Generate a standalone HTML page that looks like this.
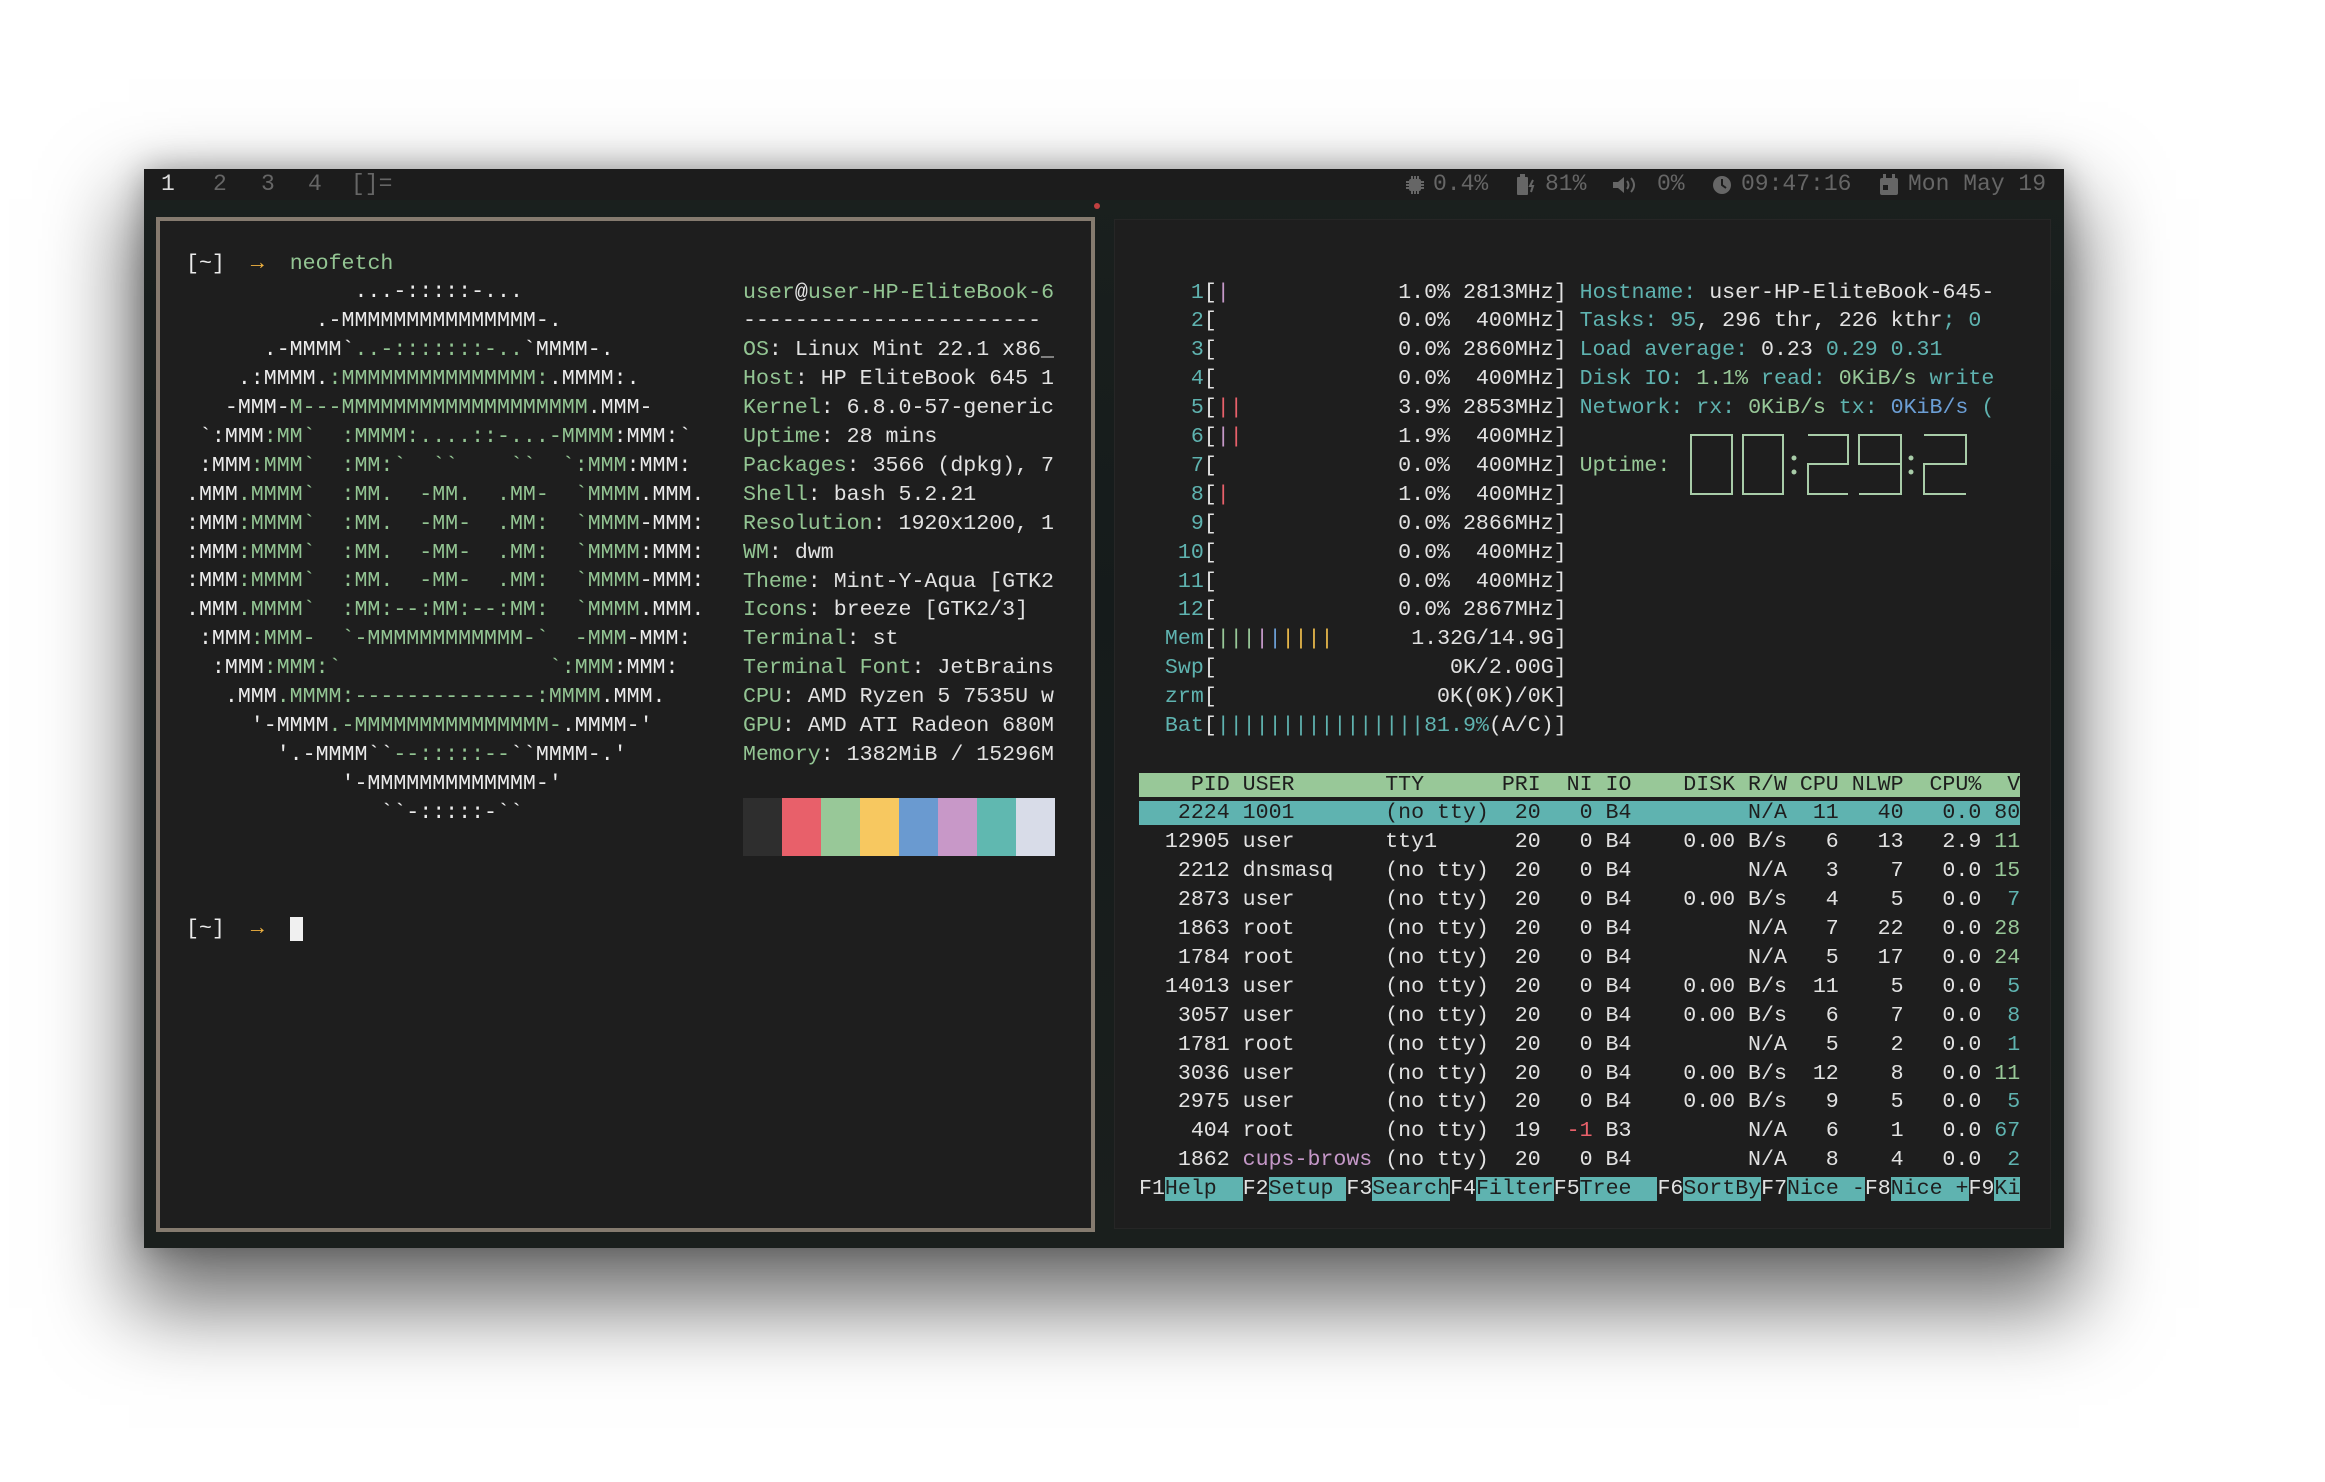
<!DOCTYPE html>
<html><head><meta charset="utf-8"><style>
*{margin:0;padding:0;box-sizing:border-box}
body{width:2325px;height:1482px;background:#fff;position:relative;overflow:hidden;font-family:"Liberation Mono",monospace}
#scr{position:absolute;left:144px;top:169px;width:1920px;height:1079px;background:linear-gradient(180deg,#1a201e 0%,#151b1b 40%,#1a1f1d 100%);box-shadow:0 45px 80px 15px rgba(0,0,0,.55),0 0 30px rgba(0,0,0,.3)}
#bar{position:absolute;left:144px;top:169px;width:1920px;height:31px;background:#1c1c1c;font-size:23px;line-height:31px;color:#666}
.t{position:absolute;top:0}
pre{font-family:"Liberation Mono",monospace;font-size:21.6px;line-height:28.9px;position:absolute;white-space:pre;color:#e2e2e2}
#lw{position:absolute;left:156px;top:217px;width:939px;height:1015px;background:#1e1e1e;border:4px solid #857b6f}
#rw{position:absolute;left:1114px;top:219px;width:937px;height:1010px;background:#1e1e1e;border:1px solid #262626}
.g{color:#93c593}.w{color:#ececec}.o{color:#f2b440}.tl{color:#5fb3b0}.gr{color:#98c898}.bl{color:#6c9fd6}.r{color:#e8606a}.p{color:#c598c8}.y{color:#e8b84a}
.hd{background:#98c898;color:#1e1e1e}.sel{background:#5fb3b0;color:#1e1e1e}.fk{background:#5fb3b0;color:#1e1e1e}
</style></head><body>
<div id="scr">
<div style="position:absolute;left:950px;top:34px;width:6px;height:6px;background:#c04040;border-radius:3px"></div>
</div>
<div id="bar">
<span class="t" style="left:17px;color:#ddd">1</span>
<span class="t" style="left:69px">2</span>
<span class="t" style="left:117px">3</span>
<span class="t" style="left:164px">4</span>
<span class="t" style="left:207px">[]=</span>
<svg class="t" style="left:1262px;top:7px" width="18" height="18" viewBox="0 0 18 18"><rect x="3" y="3" width="12" height="12" rx="2" fill="#666"/><g stroke="#666" stroke-width="2"><path d="M6 0v3M9 0v3M12 0v3M6 15v3M9 15v3M12 15v3M0 6h3M0 9h3M0 12h3M15 6h3M15 9h3M15 12h3"/></g></svg>
<span class="t" style="left:1289px">0.4%</span>
<svg class="t" style="left:1372px;top:5px" width="20" height="22" viewBox="0 0 20 22"><rect x="1" y="3" width="11" height="18" rx="1" fill="#666"/><rect x="4" y="0" width="5" height="3" fill="#666"/><path d="M17 6l-3 6h3l-2 6" stroke="#666" stroke-width="2" fill="none"/></svg>
<span class="t" style="left:1401px">81%</span>
<svg class="t" style="left:1468px;top:6px" width="26" height="20" viewBox="0 0 26 20"><path d="M1 7h5l6-5v16l-6-5H1z" fill="#666"/><path d="M15 6q3 4 0 8M19 3q6 7 0 14" stroke="#666" stroke-width="2" fill="none"/></svg>
<span class="t" style="left:1513px">0%</span>
<svg class="t" style="left:1568px;top:6px" width="20" height="20" viewBox="0 0 20 20"><circle cx="10" cy="10" r="9" fill="#666"/><path d="M10 4v6l4 3" stroke="#1c1c1c" stroke-width="2" fill="none"/></svg>
<span class="t" style="left:1597px">09:47:16</span>
<svg class="t" style="left:1735px;top:5px" width="20" height="22" viewBox="0 0 20 22"><rect x="1" y="4" width="18" height="17" rx="2" fill="#666"/><rect x="4" y="0" width="3" height="6" fill="#666"/><rect x="13" y="0" width="3" height="6" fill="#666"/><rect x="4" y="11" width="5" height="5" fill="#1c1c1c"/></svg>
<span class="t" style="left:1764px">Mon May 19</span>
</div>

<div id="lw"></div>
<pre style="left:186px;top:249.5px"><span class="w">[~]</span>  <span class="o">→</span>  <span class="g">neofetch</span>
<span class="w">             ...-:::::-...</span>
<span class="w">          .-MMMMMMMMMMMMMMM-.</span>
<span class="w">      .-MMMM`</span><span class="g">..-:::::::-..</span><span class="w">`MMMM-.</span>
<span class="w">    .:MMMM.</span><span class="g">:MMMMMMMMMMMMMMM:</span><span class="w">.MMMM:.</span>
<span class="w">   -MMM-</span><span class="g">M---MMMMMMMMMMMMMMMMMMM</span><span class="w">.MMM-</span>
<span class="w"> `:MMM</span><span class="g">:MM`  :MMMM:....::-...-MMMM</span><span class="w">:MMM:`</span>
<span class="w"> :MMM</span><span class="g">:MMM`  :MM:`  ``    ``  `:MMM</span><span class="w">:MMM:</span>
<span class="w">.MMM</span><span class="g">.MMMM`  :MM.  -MM.  .MM-  `MMMM</span><span class="w">.MMM.</span>
<span class="w">:MMM</span><span class="g">:MMMM`  :MM.  -MM-  .MM:  `MMMM</span><span class="w">-MMM:</span>
<span class="w">:MMM</span><span class="g">:MMMM`  :MM.  -MM-  .MM:  `MMMM</span><span class="w">:MMM:</span>
<span class="w">:MMM</span><span class="g">:MMMM`  :MM.  -MM-  .MM:  `MMMM</span><span class="w">-MMM:</span>
<span class="w">.MMM</span><span class="g">.MMMM`  :MM:--:MM:--:MM:  `MMMM</span><span class="w">.MMM.</span>
<span class="w"> :MMM</span><span class="g">:MMM-  `-MMMMMMMMMMMM-`  -MMM</span><span class="w">-MMM:</span>
<span class="w">  :MMM</span><span class="g">:MMM:`                `:MMM</span><span class="w">:MMM:</span>
<span class="w">   .MMM</span><span class="g">.MMMM:--------------:MMMM</span><span class="w">.MMM.</span>
<span class="w">     '-MMMM</span><span class="g">.-MMMMMMMMMMMMMMM-</span><span class="w">.MMMM-'</span>
<span class="w">       '.-MMMM``</span><span class="g">--:::::--</span><span class="w">``MMMM-.'</span>
<span class="w">            '-MMMMMMMMMMMMM-'</span>
<span class="w">               ``-:::::-``</span></pre>
<pre style="left:743px;top:278.5px"><span class="g">user</span>@<span class="g">user-HP-EliteBook-6</span>
-----------------------
<span class="g">OS</span>: Linux Mint 22.1 x86_
<span class="g">Host</span>: HP EliteBook 645 1
<span class="g">Kernel</span>: 6.8.0-57-generic
<span class="g">Uptime</span>: 28 mins
<span class="g">Packages</span>: 3566 (dpkg), 7
<span class="g">Shell</span>: bash 5.2.21
<span class="g">Resolution</span>: 1920x1200, 1
<span class="g">WM</span>: dwm
<span class="g">Theme</span>: Mint-Y-Aqua [GTK2
<span class="g">Icons</span>: breeze [GTK2/3]
<span class="g">Terminal</span>: st
<span class="g">Terminal Font</span>: JetBrains
<span class="g">CPU</span>: AMD Ryzen 5 7535U w
<span class="g">GPU</span>: AMD ATI Radeon 680M
<span class="g">Memory</span>: 1382MiB / 15296M</pre>
<div style="position:absolute;left:743px;top:798px;height:58px;width:312px;display:flex">
<div style="flex:1;background:#2e2e2e"></div><div style="flex:1;background:#e8606a"></div><div style="flex:1;background:#98c898"></div><div style="flex:1;background:#f7c860"></div><div style="flex:1;background:#6a9ad0"></div><div style="flex:1;background:#c898c8"></div><div style="flex:1;background:#60b8b0"></div><div style="flex:1;background:#d8dce8"></div>
</div>
<pre style="left:186px;top:915px"><span class="w">[~]</span>  <span class="o">→</span>  <span style="background:#f0f0f0"> </span></pre>

<div id="rw"></div>
<pre style="left:1139px;top:278.5px"><span class="tl">    1</span>[<span class="p">|</span>             1.0% 2813MHz] <span class="tl">Hostname: </span>user-HP-EliteBook-645-
<span class="tl">    2</span>[              0.0%  400MHz] <span class="tl">Tasks: 95</span>, 296 thr, 226 kthr<span class="tl">; 0</span>
<span class="tl">    3</span>[              0.0% 2860MHz] <span class="tl">Load average: </span>0.23 <span class="tl">0.29 0.31</span>
<span class="tl">    4</span>[              0.0%  400MHz] <span class="tl">Disk IO: </span><span class="gr">1.1%</span><span class="tl"> read: </span><span class="gr">0KiB/s</span><span class="tl"> write</span>
<span class="tl">    5</span>[<span class="r">||</span>            3.9% 2853MHz] <span class="tl">Network: rx: </span><span class="gr">0KiB/s</span><span class="tl"> tx: </span><span class="bl">0KiB/s</span><span class="tl"> (</span>
<span class="tl">    6</span>[<span class="p">|</span><span class="r">|</span>            1.9%  400MHz]
<span class="tl">    7</span>[              0.0%  400MHz] <span class="gr">Uptime:</span>
<span class="tl">    8</span>[<span class="r">|</span>             1.0%  400MHz]
<span class="tl">    9</span>[              0.0% 2866MHz]
<span class="tl">   10</span>[              0.0%  400MHz]
<span class="tl">   11</span>[              0.0%  400MHz]
<span class="tl">   12</span>[              0.0% 2867MHz]
<span class="tl">  Mem</span>[<span class="gr">|||</span><span class="p">|</span><span class="bl">|</span><span class="y">||||</span>      1.32G/14.9G]
<span class="tl">  Swp</span>[                  0K/2.00G]
<span class="tl">  zrm</span>[                 0K(0K)/0K]
<span class="tl">  Bat</span>[<span class="tl">||||||||||||||||81.9%</span>(A/C)]</pre>
<svg style="position:absolute;left:1686px;top:432px" width="285" height="66" viewBox="1686 432 285 66" fill="none" stroke="#a8cca8" stroke-width="2">
<rect x="1691" y="435" width="41" height="59"/>
<rect x="1743" y="435" width="40" height="59"/>
<circle cx="1794" cy="458" r="1.5" fill="#a8cca8"/><circle cx="1794" cy="472" r="1.5" fill="#a8cca8"/>
<path d="M1808 435h40v29h-40v30h40"/>
<path d="M1901 464h-42v-29h42v59h-42"/>
<circle cx="1911" cy="458" r="1.5" fill="#a8cca8"/><circle cx="1911" cy="472" r="1.5" fill="#a8cca8"/>
<path d="M1924 435h42v29h-42v30h42"/>
</svg>
<pre style="left:1139px;top:770.5px"><span class="hd">    PID USER       TTY      PRI  NI IO    DISK R/W CPU NLWP  CPU%  V</span>
<span class="sel">   2224 1001       (no tty)  20   0 B4         N/A  11   40   0.0 80</span>
  12905 user       tty1      20   0 B4    0.00 B/s   6   13   2.9 <span class="gr">11</span>
   2212 dnsmasq    (no tty)  20   0 B4         N/A   3    7   0.0 <span class="gr">15</span>
   2873 user       (no tty)  20   0 B4    0.00 B/s   4    5   0.0 <span class="tl"> 7</span>
   1863 root       (no tty)  20   0 B4         N/A   7   22   0.0 <span class="gr">28</span>
   1784 root       (no tty)  20   0 B4         N/A   5   17   0.0 <span class="gr">24</span>
  14013 user       (no tty)  20   0 B4    0.00 B/s  11    5   0.0 <span class="tl"> 5</span>
   3057 user       (no tty)  20   0 B4    0.00 B/s   6    7   0.0 <span class="tl"> 8</span>
   1781 root       (no tty)  20   0 B4         N/A   5    2   0.0 <span class="tl"> 1</span>
   3036 user       (no tty)  20   0 B4    0.00 B/s  12    8   0.0 <span class="gr">11</span>
   2975 user       (no tty)  20   0 B4    0.00 B/s   9    5   0.0 <span class="tl"> 5</span>
    404 root       (no tty)  19  <span class="r">-1</span> B3         N/A   6    1   0.0 <span class="tl">67</span>
   1862 <span class="p">cups-brows</span> (no tty)  20   0 B4         N/A   8    4   0.0 <span class="tl"> 2</span>
F1<span class="fk">Help  </span>F2<span class="fk">Setup </span>F3<span class="fk">Search</span>F4<span class="fk">Filter</span>F5<span class="fk">Tree  </span>F6<span class="fk">SortBy</span>F7<span class="fk">Nice -</span>F8<span class="fk">Nice +</span>F9<span class="fk">Ki</span></pre>
</body></html>
